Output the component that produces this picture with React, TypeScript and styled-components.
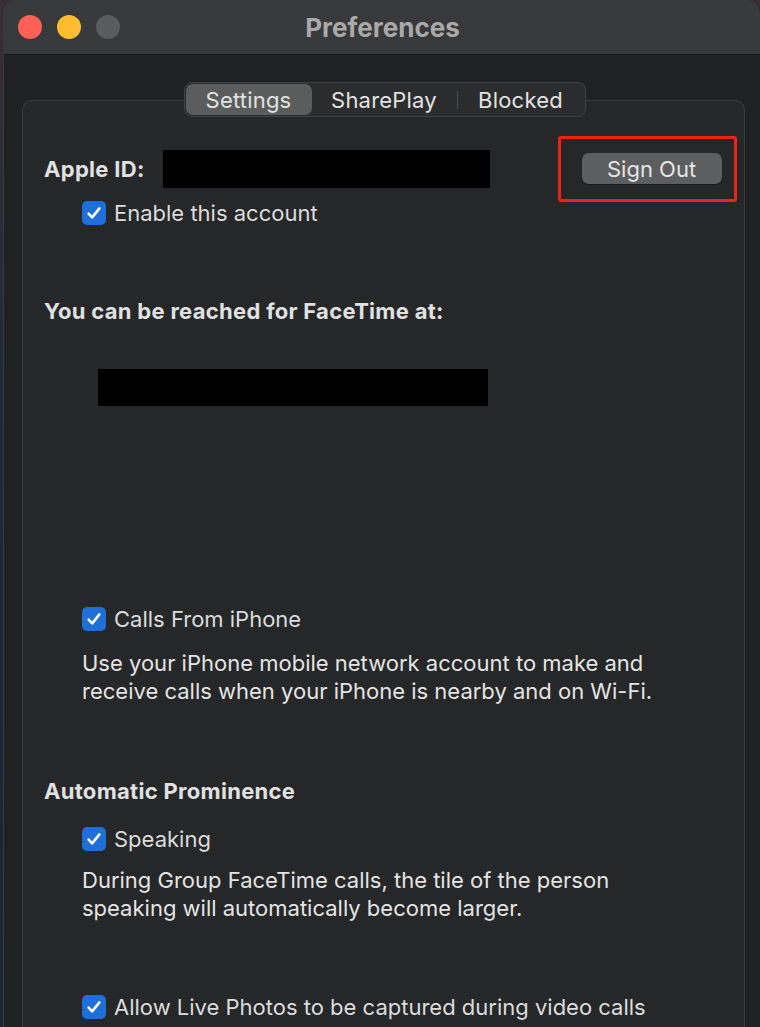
import React from "react";
import styled, { createGlobalStyle } from "styled-components";

const Global = createGlobalStyle`
  html, body { margin: 0; padding: 0; }
  body {
    background: #2c3140;
    width: 760px;
    height: 1027px;
    overflow: hidden;
    font-family: Inter, "Liberation Sans", sans-serif;
    -webkit-font-smoothing: antialiased;
  }
`;

const Desktop = styled.div`
  display: flex;
  height: 1027px;
  padding-left: 3px;
  background: linear-gradient(180deg, #3a2e33 0%, #1d2a3a 40%, #1a2433 100%);
`;

const Window = styled.div`
  flex: 1;
  display: flex;
  flex-direction: column;
  background: #1f2123;
  border-top-left-radius: 12px;
  border-top-right-radius: 12px;
  overflow: hidden;
  box-shadow: inset 1px 0 0 #3a3b3d;
`;

const TitleBar = styled.div`
  position: relative;
  height: 54px;
  flex: none;
  display: flex;
  align-items: center;
  justify-content: center;
  background: #38393b;
  border-bottom: 1px solid #151617;
`;

const Lights = styled.div`
  position: absolute;
  left: 15px;
  top: 15px;
  display: flex;
  gap: 15px;
`;

const Light = styled.span<{ $c: string }>`
  width: 24px;
  height: 24px;
  border-radius: 50%;
  background: ${(p) => p.$c};
`;

const Title = styled.div`
  font-size: 26px;
  font-weight: 700;
  color: #a9a9aa;
  margin-left: 2px;
`;

const Body = styled.div`
  display: flex;
  flex-direction: column;
  padding: 27px 15px 0 19px;
`;

const Segmented = styled.div`
  align-self: center;
  margin-left: 2px;
  display: flex;
  align-items: center;
  height: 31px;
  padding: 1px;
  background: #2a2c2e;
  border: 1px solid #3f4143;
  border-radius: 8px;
  margin-bottom: -17px;
  position: relative;
  z-index: 1;
`;

const Segment = styled.div<{ $w: number; $active?: boolean }>`
  width: ${(p) => p.$w}px;
  height: 31px;
  display: flex;
  align-items: center;
  justify-content: center;
  font-size: 22px;
  letter-spacing: 0.2px;
  color: #e2e2e2;
  border-radius: 7px;
  background: ${(p) => (p.$active ? "#5b5d5d" : "transparent")};
`;

const Divider = styled.span`
  width: 1px;
  height: 18px;
  background: #4a4c4e;
`;

const Box = styled.div`
  display: flex;
  flex-direction: column;
  background: #252729;
  border: 1px solid #3a3c3e;
  border-bottom: none;
  border-radius: 10px 10px 0 0;
  padding: 35px 0 0 21px;
  height: 940px;
  color: #dedede;
`;

const AppleRow = styled.div`
  display: flex;
  align-items: center;
`;

const Heading = styled.div<{ $mt?: number }>`
  font-size: 22px;
  font-weight: 700;
  letter-spacing: 0.3px;
  line-height: 28px;
  color: #e1e1e1;
  margin-top: ${(p) => p.$mt ?? 0}px;
`;

const Redacted = styled.div<{ $w: number; $h: number; $ml: number; $mt?: number }>`
  width: ${(p) => p.$w}px;
  height: ${(p) => p.$h}px;
  margin-left: ${(p) => p.$ml}px;
  margin-top: ${(p) => p.$mt ?? 0}px;
  background: #000;
  flex: none;
`;

const Highlight = styled.div`
  margin-left: 68px;
  border: 3px solid #f5210e;
  border-radius: 3px;
  padding: 14px 12px 15px 21px;
`;

const Button = styled.div`
  width: 140px;
  height: 31px;
  display: flex;
  align-items: center;
  justify-content: center;
  border-radius: 7px;
  background: #5c5e5f;
  color: #e6e6e6;
  font-size: 22px;
  box-shadow: 0 1px 1px rgba(0, 0, 0, 0.3);
`;

const CheckRow = styled.div<{ $mt?: number }>`
  display: flex;
  align-items: center;
  gap: 8px;
  height: 24px;
  margin-left: 38px;
  margin-top: ${(p) => p.$mt ?? 0}px;
  font-size: 22px;
  color: #dcdcdc;
`;

const Box24 = styled.span`
  width: 24px;
  height: 24px;
  border-radius: 5px;
  background: #1f6fd9;
  display: flex;
  align-items: center;
  justify-content: center;
  flex: none;
`;

const Para = styled.div<{ $mt?: number }>`
  margin-left: 38px;
  margin-top: ${(p) => p.$mt ?? 0}px;
  font-size: 22px;
  line-height: 28px;
  color: #e4e4e4;
`;

const Check = ({ label, mt }: { label: string; mt?: number }) => (
  <CheckRow $mt={mt}>
    <Box24>
      <svg width="16" height="16" viewBox="0 0 16 16">
        <path
          d="M2.6 8.6 L6.2 12.4 L13.4 3.4"
          fill="none"
          stroke="#fff"
          strokeWidth="2.6"
          strokeLinecap="round"
          strokeLinejoin="round"
        />
      </svg>
    </Box24>
    <span>{label}</span>
  </CheckRow>
);

export default function App() {
  return (
    <>
      <Global />
      <Desktop>
        <Window>
          <TitleBar>
            <Lights>
              <Light $c="#fe5f57" />
              <Light $c="#febc2e" />
              <Light $c="#5a5b5c" />
            </Lights>
            <Title>Preferences</Title>
          </TitleBar>
          <Body>
            <Segmented>
              <Segment $w={126} $active>Settings</Segment>
              <Segment $w={145}>SharePlay</Segment>
              <Divider />
              <Segment $w={126}>Blocked</Segment>
            </Segmented>
            <Box>
              <AppleRow>
                <Heading>Apple ID:</Heading>
                <Redacted $w={327} $h={38} $ml={18} />
                <Highlight>
                  <Button>Sign Out</Button>
                </Highlight>
              </AppleRow>
              <Check label="Enable this account" mt={-1} />
              <Heading $mt={72}>You can be reached for FaceTime at:</Heading>
              <Redacted $w={390} $h={37} $ml={54} $mt={44} />
              <Check label="Calls From iPhone" mt={201} />
              <Para $mt={18}>
                Use your iPhone mobile network account to make and
                <br />
                receive calls when your iPhone is nearby and on Wi-Fi.
              </Para>
              <Heading $mt={72}>Automatic Prominence</Heading>
              <Check label="Speaking" mt={22} />
              <Para $mt={15}>
                During Group FaceTime calls, the tile of the person
                <br />
                speaking will automatically become larger.
              </Para>
              <Check label="Allow Live Photos to be captured during video calls" mt={73} />
            </Box>
          </Body>
        </Window>
      </Desktop>
    </>
  );
}
